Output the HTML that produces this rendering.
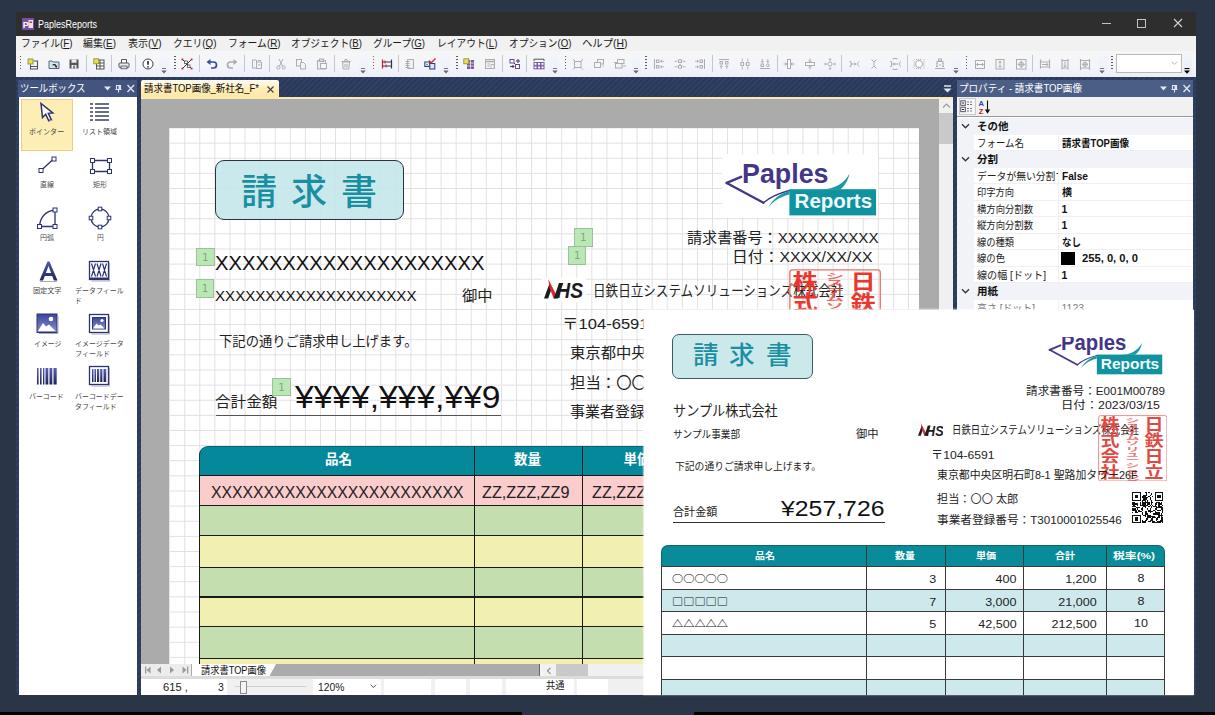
<!DOCTYPE html>
<html lang="ja"><head><meta charset="utf-8"><title>PaplesReports</title>
<style>
html,body{margin:0;padding:0}
body{width:1215px;height:715px;overflow:hidden;background:#2b3548;font-family:"Liberation Sans","Noto Sans CJK JP",sans-serif;}
#root{position:relative;width:1215px;height:715px;overflow:hidden}
.a{position:absolute}
.t{position:absolute;white-space:nowrap;line-height:1;transform-origin:0 0}
u{text-decoration:underline;text-underline-offset:1px}

</style></head>
<body>
<div id="root">
<!-- chrome -->
<div class="a" style="left:0px;top:712px;width:522px;height:3px;background:#000;"></div>
<div class="a" style="left:694px;top:712px;width:521px;height:3px;background:#000;"></div>
<div class="a" style="left:16px;top:12px;width:1180px;height:683px;background:#2a3a5c;background-image:repeating-linear-gradient(135deg,rgba(255,255,255,0.035) 0 1.500px,transparent 1.500px 4px)"></div>
<div class="a" style="left:16px;top:12px;width:1180px;height:23.5px;background:#2e2e2e;"></div>
<svg class="a" style="left:22px;top:18px;" width="12" height="12" viewBox="0 0 12 12"><rect x="0" y="0" width="12" height="12" fill="#7a4f9a"/><rect x="6.5" y="2" width="4.5" height="8" fill="#e8e4ee"/><rect x="7.5" y="3.5" width="2.5" height="1.5" fill="#c33"/><text x="0.8" y="9.6" font-family="Liberation Sans,sans-serif" font-weight="bold" font-size="9" fill="#fff">P</text></svg>
<div class="t" style="left:38px;top:19px;color:#fff;font-size:10.5px;transform:scaleX(0.8566);">PaplesReports</div>
<svg class="a" style="left:1095px;top:14px;" width="100" height="20" viewBox="0 0 100 20"><g stroke="#d4d4d4" stroke-width="0.900" fill="none"><path d="M7 9.5h9"/><rect x="42.5" y="5.5" width="8" height="8"/><path d="M79 5l8 8M87 5l-8 8" stroke-width="1.1"/></g></svg>
<div class="a" style="left:16px;top:35.5px;width:1180px;height:15.5px;background:#f1f1f1;"></div>
<div class="t" style="left:21px;top:38px;color:#1a1a1a;font-size:10.5px;transform:scaleX(0.9292);">ファイル(<u>F</u>)</div>
<div class="t" style="left:83px;top:38px;color:#1a1a1a;font-size:10.5px;transform:scaleX(0.9424);">編集(<u>E</u>)</div>
<div class="t" style="left:127.5px;top:38px;color:#1a1a1a;font-size:10.5px;transform:scaleX(0.9567);">表示(<u>V</u>)</div>
<div class="t" style="left:172.5px;top:38px;color:#1a1a1a;font-size:10.5px;transform:scaleX(0.9320);">クエリ(<u>Q</u>)</div>
<div class="t" style="left:227.5px;top:38px;color:#1a1a1a;font-size:10.5px;transform:scaleX(0.9328);">フォーム(<u>R</u>)</div>
<div class="t" style="left:291px;top:38px;color:#1a1a1a;font-size:10.5px;transform:scaleX(0.9219);">オブジェクト(<u>B</u>)</div>
<div class="t" style="left:373px;top:38px;color:#1a1a1a;font-size:10.5px;transform:scaleX(0.9196);">グループ(<u>G</u>)</div>
<div class="t" style="left:436.5px;top:38px;color:#1a1a1a;font-size:10.5px;transform:scaleX(0.9259);">レイアウト(<u>L</u>)</div>
<div class="t" style="left:508.5px;top:38px;color:#1a1a1a;font-size:10.5px;transform:scaleX(0.9236);">オプション(<u>O</u>)</div>
<div class="t" style="left:581.5px;top:38px;color:#1a1a1a;font-size:10.5px;transform:scaleX(0.9871);">ヘルプ(<u>H</u>)</div>
<!-- toolbar -->
<div class="a" style="left:16px;top:51px;width:1180px;height:25.5px;background:linear-gradient(#f6f6f6,#f3f5fa 60%,#eceff6);"></div>
<div class="a" style="left:20px;top:56px;width:1.3px;height:13px;background:transparent;background-image:repeating-linear-gradient(#5a5a5a 0 1.400px,transparent 1.400px 3px)"></div>
<svg class="a" style="left:26.8px;top:58px;" width="12" height="12" viewBox="0 0 12 12"><rect x="1" y="1" width="5" height="5" fill="#e6e04a" stroke="#8a8a2a" stroke-width=".8"/><path d="M6.5 3h4v8h-7v-4.5" fill="none" stroke="#555" stroke-width="1.1"/><path d="M4 8.5h6" stroke="#555" stroke-width="1"/></svg>
<svg class="a" style="left:48px;top:58px;" width="12" height="12" viewBox="0 0 12 12"><path d="M1 3h3l1 1h6v6.5h-10z" fill="#d5e6ee" stroke="#4a5a66" stroke-width=".9"/><path d="M4 7.5c1-2 4-2 4.5.5l1-.5-1 2.5-2-1.5 1-.2c-.5-1.3-2-1.300-3.500-.8z" fill="#223"/></svg>
<svg class="a" style="left:68.3px;top:58px;" width="12" height="12" viewBox="0 0 12 12"><rect x="1.500" y="1.500" width="9" height="9" fill="#555" /><rect x="3.500" y="1.500" width="5" height="3.200" fill="#f0f0f0"/><rect x="3.500" y="7" width="5" height="3.500" fill="#f0f0f0"/><rect x="5.300" y="7.600" width="1.500" height="2.900" fill="#555"/></svg>
<div class="a" style="left:86.1px;top:55px;width:1px;height:17px;background:#c4c7cc;"></div>
<svg class="a" style="left:92.5px;top:58px;" width="12" height="12" viewBox="0 0 12 12"><rect x="3.500" y="2" width="7.500" height="9" fill="#fff" stroke="#555" stroke-width="1"/><path d="M3.500 5h7.500M3.500 8h7.500M7 2v9" stroke="#555" stroke-width="1"/><rect x="0.800" y="0.800" width="5" height="5" fill="#e6e04a" stroke="#8a8a2a" stroke-width=".8"/></svg>
<div class="a" style="left:110.8px;top:55px;width:1px;height:17px;background:#c4c7cc;"></div>
<svg class="a" style="left:117.6px;top:58px;" width="12" height="12" viewBox="0 0 12 12"><path d="M3.500 5v-3.500h5v3.500" fill="#fff" stroke="#555" stroke-width="1"/><rect x="1" y="5" width="10" height="4.500" rx="1" fill="#e8eef0" stroke="#555" stroke-width="1"/><rect x="3" y="8" width="6" height="2.800" fill="#cfe0e4" stroke="#555" stroke-width=".8"/></svg>
<div class="a" style="left:135.0px;top:55px;width:1px;height:17px;background:#c4c7cc;"></div>
<svg class="a" style="left:141.8px;top:58px;" width="12" height="12" viewBox="0 0 12 12"><circle cx="6" cy="6" r="5" fill="#fff" stroke="#444" stroke-width="1"/><path d="M6 3v3.800" stroke="#222" stroke-width="1.600"/><circle cx="6" cy="8.800" r=".9" fill="#222"/></svg>
<div class="a" style="left:159.9px;top:52px;width:9px;height:23px;background:linear-gradient(#f4f6fa,#ebeff8);"></div>
<svg class="a" style="left:161.4px;top:67.5px;" width="6" height="6" viewBox="0 0 6 6"><path d="M1 0.500h4" stroke="#777" stroke-width="1"/><path d="M0.300 2.500h5.400l-2.700 3z" fill="#666"/></svg>
<div class="a" style="left:174.4px;top:56px;width:1.3px;height:13px;background:transparent;background-image:repeating-linear-gradient(#5a5a5a 0 1.400px,transparent 1.400px 3px)"></div>
<svg class="a" style="left:181px;top:58px;" width="12" height="12" viewBox="0 0 12 12"><path d="M2 2l8 8M10 2l-8 8" stroke="#334" stroke-width="1"/><rect x="3.500" y="3" width="3" height="2.500" fill="#fff" stroke="#334" stroke-width=".7"/><rect x="6.500" y="7" width="2.500" height="2.500" fill="#fff" stroke="#334" stroke-width=".7"/><g fill="#d22"><rect x="0.500" y="0.500" width="1.800" height="1.800"/><rect x="9.700" y="0.500" width="1.800" height="1.800"/><rect x="0.500" y="9.700" width="1.800" height="1.800"/><rect x="9.700" y="9.700" width="1.800" height="1.800"/></g></svg>
<div class="a" style="left:199.2px;top:55px;width:1px;height:17px;background:#c4c7cc;"></div>
<svg class="a" style="left:205.8px;top:58px;" width="12" height="12" viewBox="0 0 12 12"><path d="M3 4h4.500a3 3 0 0 1 0 6h-2.500" fill="none" stroke="#3a4a9a" stroke-width="1.700"/><path d="M0.500 4l4-3v6z" fill="#3a4a9a"/></svg>
<svg class="a" style="left:225.8px;top:58px;" width="12" height="12" viewBox="0 0 12 12"><path d="M9 4h-4.500a3 3 0 0 0 0 6h2.500" fill="none" stroke="#adadad" stroke-width="1.700"/><path d="M11.500 4l-4-3v6z" fill="#adadad"/></svg>
<div class="a" style="left:244.1px;top:55px;width:1px;height:17px;background:#c4c7cc;"></div>
<svg class="a" style="left:250.5px;top:58px;" width="12" height="12" viewBox="0 0 12 12"><path d="M1.500 2h4v8h-4z M5.500 4h5v6.500h-5z" fill="none" stroke="#adadad" stroke-width="1"/><path d="M7 2.500l3 0M7 7h2.500" stroke="#adadad"/></svg>
<div class="a" style="left:268.8px;top:55px;width:1px;height:17px;background:#c4c7cc;"></div>
<svg class="a" style="left:275px;top:58px;" width="12" height="12" viewBox="0 0 12 12"><path d="M4 1l3.500 7M8 1l-3.500 7" stroke="#adadad" stroke-width="1"/><circle cx="3.300" cy="9.500" r="1.600" fill="none" stroke="#adadad"/><circle cx="8.700" cy="9.500" r="1.600" fill="none" stroke="#adadad"/></svg>
<svg class="a" style="left:295.4px;top:58px;" width="12" height="12" viewBox="0 0 12 12"><rect x="1.500" y="1.500" width="5" height="6.500" fill="#f4f4f4" stroke="#adadad"/><path d="M5.500 4.500h3l2 2v4.500h-5z" fill="#f4f4f4" stroke="#adadad"/></svg>
<svg class="a" style="left:316.4px;top:58px;" width="12" height="12" viewBox="0 0 12 12"><rect x="1.500" y="2.500" width="8" height="8.500" fill="#eee" stroke="#adadad"/><rect x="3.500" y="1" width="4" height="2.500" fill="#ddd" stroke="#adadad"/><rect x="4.500" y="5.500" width="6" height="5" fill="#f8f8f8" stroke="#adadad"/></svg>
<div class="a" style="left:334.3px;top:55px;width:1px;height:17px;background:#c4c7cc;"></div>
<svg class="a" style="left:340.4px;top:58px;" width="12" height="12" viewBox="0 0 12 12"><path d="M2.500 4h7l-.7 7h-5.600z" fill="#f2f2f2" stroke="#adadad"/><path d="M1.500 3.500h9M4.500 3.500l.5-2h2l.5 2M5 6v3.500M7 6v3.500" fill="none" stroke="#adadad"/></svg>
<div class="a" style="left:358.5px;top:52px;width:9px;height:23px;background:linear-gradient(#f4f6fa,#ebeff8);"></div>
<svg class="a" style="left:360px;top:67.5px;" width="6" height="6" viewBox="0 0 6 6"><path d="M1 0.500h4" stroke="#777" stroke-width="1"/><path d="M0.300 2.500h5.400l-2.700 3z" fill="#666"/></svg>
<div class="a" style="left:372.9px;top:56px;width:1.3px;height:13px;background:transparent;background-image:repeating-linear-gradient(#c05050 0 1.400px,transparent 1.400px 3px)"></div>
<svg class="a" style="left:380.6px;top:58px;" width="12" height="12" viewBox="0 0 12 12"><path d="M1.500 1.500v9" stroke="#c22" stroke-width="1.200"/><path d="M10.500 1.500v9" stroke="#335" stroke-width="1.200"/><path d="M1.500 4h9M1.500 8h9" stroke="#335" stroke-width="1"/><path d="M4 2.500v3M5 6.500v3" stroke="#c22" stroke-width="1"/></svg>
<div class="a" style="left:398.0px;top:55px;width:1px;height:17px;background:#c4c7cc;"></div>
<svg class="a" style="left:404px;top:58px;" width="12" height="12" viewBox="0 0 12 12"><path d="M3.500 1.500h6v9h-6z" fill="#f0f0f0" stroke="#adadad"/><path d="M1.500 3.500h4M1.500 5.500h4M1.500 7.500h4M1.500 9.500h4" stroke="#adadad"/></svg>
<svg class="a" style="left:423.8px;top:58px;" width="12" height="12" viewBox="0 0 12 12"><rect x="0.800" y="4" width="5" height="4.500" fill="#fff" stroke="#2a3a8a" stroke-width="1"/><rect x="5.800" y="5.500" width="5" height="5.500" fill="#dfe6f5" stroke="#2a3a8a" stroke-width="1"/><path d="M2 5.500l2 2M4 5.500l-2 2" stroke="#2a3a8a" stroke-width=".7"/><path d="M5 2.500l2 2.500l4.500-4.500" fill="none" stroke="#d22" stroke-width="1.300"/></svg>
<div class="a" style="left:441.4px;top:52px;width:9px;height:23px;background:linear-gradient(#f4f6fa,#ebeff8);"></div>
<svg class="a" style="left:442.9px;top:67.5px;" width="6" height="6" viewBox="0 0 6 6"><path d="M1 0.500h4" stroke="#777" stroke-width="1"/><path d="M0.300 2.500h5.400l-2.700 3z" fill="#666"/></svg>
<div class="a" style="left:456.4px;top:56px;width:1.3px;height:13px;background:transparent;background-image:repeating-linear-gradient(#5a5a5a 0 1.400px,transparent 1.400px 3px)"></div>
<svg class="a" style="left:463.3px;top:58px;" width="12" height="12" viewBox="0 0 12 12"><rect x="4" y="2" width="7" height="9" fill="#7a5aa0"/><path d="M4 5h7M4 8h7M7.500 2v9" stroke="#e8e0f0" stroke-width=".8"/><rect x="0.800" y="0.800" width="5" height="5" fill="#e6e04a" stroke="#8a8a2a" stroke-width=".8"/></svg>
<svg class="a" style="left:483.8px;top:58px;" width="12" height="12" viewBox="0 0 12 12"><rect x="1.500" y="1.500" width="9" height="9" fill="#f2f2f2" stroke="#adadad"/><path d="M1.500 3.500h9" stroke="#adadad" stroke-width="1.500"/><path d="M3.500 6h2M3.500 8h2" stroke="#adadad"/><rect x="7" y="6.500" width="3" height="4" fill="#fff" stroke="#adadad" stroke-width=".8"/></svg>
<div class="a" style="left:502.2px;top:55px;width:1px;height:17px;background:#c4c7cc;"></div>
<svg class="a" style="left:508.5px;top:58px;" width="12" height="12" viewBox="0 0 12 12"><rect x="1" y="1.500" width="4" height="3.500" fill="#fff" stroke="#6a4a90" stroke-width="1"/><rect x="6.500" y="6.500" width="4" height="4" fill="#fff" stroke="#6a4a90" stroke-width="1"/><path d="M7 3h4M9 1v4M1 8.500h4M3.500 7l1.500 1.500l-1.500 1.500M5 5l1.500 1.500" fill="none" stroke="#4a2a70" stroke-width="1"/></svg>
<div class="a" style="left:525.9px;top:55px;width:1px;height:17px;background:#c4c7cc;"></div>
<svg class="a" style="left:532.5px;top:58px;" width="12" height="12" viewBox="0 0 12 12"><path d="M1 3v-1.800h10v1.800" fill="none" stroke="#555" stroke-width="1"/><g fill="#fff" stroke="#7a5aa0" stroke-width="1"><rect x="1" y="4.500" width="3" height="2.800"/><rect x="4.500" y="4.500" width="3" height="2.800"/><rect x="8" y="4.500" width="3" height="2.800"/><rect x="1" y="8" width="3" height="2.800"/><rect x="4.500" y="8" width="3" height="2.800"/><rect x="8" y="8" width="3" height="2.800"/></g></svg>
<div class="a" style="left:550.0px;top:52px;width:9px;height:23px;background:linear-gradient(#f4f6fa,#ebeff8);"></div>
<svg class="a" style="left:551.5px;top:67.5px;" width="6" height="6" viewBox="0 0 6 6"><path d="M1 0.500h4" stroke="#777" stroke-width="1"/><path d="M0.300 2.500h5.400l-2.700 3z" fill="#666"/></svg>
<div class="a" style="left:565.0px;top:56px;width:1.3px;height:13px;background:transparent;background-image:repeating-linear-gradient(#5a5a5a 0 1.400px,transparent 1.400px 3px)"></div>
<svg class="a" style="left:572px;top:58px;" width="12" height="12" viewBox="0 0 12 12"><rect x="2.500" y="3.500" width="6.500" height="6" fill="#f4f4f4" stroke="#adadad"/><path d="M1 1l2 2M11 1l-2 2M1 11.500l1.500-1.500M11 11.500l-1.500-1.500" stroke="#adadad"/></svg>
<svg class="a" style="left:592.5px;top:58px;" width="12" height="12" viewBox="0 0 12 12"><rect x="4.500" y="1.500" width="6" height="4.500" fill="#f4f4f4" stroke="#adadad"/><rect x="1.500" y="4.500" width="6" height="5" fill="#f4f4f4" stroke="#adadad"/><path d="M9.500 8l1.500 0" stroke="#adadad"/></svg>
<svg class="a" style="left:614px;top:58px;" width="12" height="12" viewBox="0 0 12 12"><rect x="3.500" y="1.500" width="6.500" height="4" fill="#f4f4f4" stroke="#adadad"/><rect x="1.500" y="5.500" width="6.500" height="4.500" fill="#f4f4f4" stroke="#adadad"/><path d="M0 4.500h3M9 8h3" stroke="#adadad"/></svg>
<div class="a" style="left:631.5px;top:52px;width:9px;height:23px;background:linear-gradient(#f4f6fa,#ebeff8);"></div>
<svg class="a" style="left:633px;top:67.5px;" width="6" height="6" viewBox="0 0 6 6"><path d="M1 0.500h4" stroke="#777" stroke-width="1"/><path d="M0.300 2.500h5.400l-2.700 3z" fill="#666"/></svg>
<div class="a" style="left:645.3px;top:56px;width:1.3px;height:13px;background:transparent;background-image:repeating-linear-gradient(#5a5a5a 0 1.400px,transparent 1.400px 3px)"></div>
<svg class="a" style="left:653px;top:58px;" width="12" height="12" viewBox="0 0 12 12"><path d="M1.500 1v10" stroke="#adadad"/><rect x="3.500" y="2" width="2.500" height="2.500" fill="none" stroke="#adadad"/><rect x="3.500" y="7.500" width="2.500" height="2.500" fill="none" stroke="#adadad"/><path d="M7.500 3.300h3.500M7.500 8.800h3.500M9 2l-1.500 1.300l1.500 1.300M9 7.500l-1.500 1.300l1.500 1.300" fill="none" stroke="#adadad" stroke-width=".9"/></svg>
<svg class="a" style="left:673.7px;top:58px;" width="12" height="12" viewBox="0 0 12 12"><path d="M6 1v10" stroke="#adadad" stroke-dasharray="1.500 1"/><rect x="4.500" y="2" width="3" height="2.500" fill="#fff" stroke="#adadad"/><rect x="4.500" y="7.500" width="3" height="2.500" fill="#fff" stroke="#adadad"/><path d="M0.500 3.300h3M8.500 3.300h3M0.500 8.800h3M8.500 8.800h3" stroke="#adadad" stroke-width=".9"/></svg>
<svg class="a" style="left:693.7px;top:58px;" width="12" height="12" viewBox="0 0 12 12"><path d="M10.500 1v10" stroke="#adadad"/><rect x="6" y="2" width="2.500" height="2.500" fill="none" stroke="#adadad"/><rect x="6" y="7.500" width="2.500" height="2.500" fill="none" stroke="#adadad"/><path d="M1 3.300h3.500M1 8.800h3.500M3 2l1.500 1.300l-1.500 1.300M3 7.500l1.500 1.300l-1.500 1.300" fill="none" stroke="#adadad" stroke-width=".9"/></svg>
<div class="a" style="left:712.0px;top:55px;width:1px;height:17px;background:#c4c7cc;"></div>
<svg class="a" style="left:718px;top:58px;" width="12" height="12" viewBox="0 0 12 12"><path d="M1 1.500h10" stroke="#adadad"/><rect x="2" y="3.500" width="2.500" height="2.500" fill="none" stroke="#adadad"/><rect x="7.500" y="3.500" width="2.500" height="2.500" fill="none" stroke="#adadad"/><path d="M3.300 7.500v3.500M8.800 7.500v3.500M2 9l1.300-1.500l1.300 1.500M7.500 9l1.300-1.500l1.300 1.500" fill="none" stroke="#adadad" stroke-width=".9"/></svg>
<svg class="a" style="left:738.6px;top:58px;" width="12" height="12" viewBox="0 0 12 12"><path d="M1 6h10" stroke="#adadad" stroke-dasharray="1.500 1"/><rect x="2" y="4.500" width="2.500" height="3" fill="#fff" stroke="#adadad"/><rect x="7.500" y="4.500" width="2.500" height="3" fill="#fff" stroke="#adadad"/><path d="M3.300 0.500v3M8.800 0.500v3M3.300 8.500v3M8.800 8.500v3" stroke="#adadad" stroke-width=".9"/></svg>
<svg class="a" style="left:758.9px;top:58px;" width="12" height="12" viewBox="0 0 12 12"><path d="M1 10.500h10" stroke="#adadad"/><rect x="2" y="6" width="2.500" height="2.500" fill="none" stroke="#adadad"/><circle cx="8.800" cy="7.300" r="1.400" fill="none" stroke="#adadad"/><path d="M3.300 1v3.500M8.800 1v3.500M2 3l1.300 1.500l1.300-1.500M7.500 3l1.300 1.500l1.300-1.500" fill="none" stroke="#adadad" stroke-width=".9"/></svg>
<div class="a" style="left:776.7px;top:55px;width:1px;height:17px;background:#c4c7cc;"></div>
<svg class="a" style="left:783.3px;top:58px;" width="12" height="12" viewBox="0 0 12 12"><rect x="4.500" y="1.500" width="3" height="9" fill="#fff" stroke="#adadad"/><path d="M0.500 6h3.500M8 6h3.500M2.500 4.700l1.500 1.300l-1.500 1.300M9.500 4.700l-1.500 1.300l1.500 1.300" fill="none" stroke="#adadad" stroke-width=".9"/></svg>
<svg class="a" style="left:803.6px;top:58px;" width="12" height="12" viewBox="0 0 12 12"><rect x="1.500" y="4.500" width="9" height="3" fill="#fff" stroke="#adadad"/><path d="M6 0.500v3.500M6 8v3.500M4.700 2.500l1.300 1.500l1.300-1.500M4.700 9.500l1.300-1.500l1.300 1.500" fill="none" stroke="#adadad" stroke-width=".9"/></svg>
<svg class="a" style="left:823.8px;top:58px;" width="12" height="12" viewBox="0 0 12 12"><circle cx="6" cy="6" r="2" fill="#fff" stroke="#adadad"/><path d="M0.500 6h3M8.500 6h3M6 0.500v3M6 8.500v3" stroke="#adadad" stroke-width=".9"/><path d="M2 4.800l-1.500 1.200l1.500 1.200M10 4.800l1.500 1.200l-1.500 1.200M4.800 2l1.200-1.500l1.200 1.500M4.800 10l1.200 1.500l1.200-1.500" fill="none" stroke="#adadad" stroke-width=".8"/></svg>
<div class="a" style="left:841.2px;top:55px;width:1px;height:17px;background:#c4c7cc;"></div>
<svg class="a" style="left:847.5px;top:58px;" width="12" height="12" viewBox="0 0 12 12"><path d="M1.500 3.500h1.500v5h-1.500M3 6h5M6.500 4.500l1.500 1.500l-1.500 1.500M11 3.500l-2 2.500l2 2.500" fill="none" stroke="#adadad"/></svg>
<svg class="a" style="left:868.3px;top:58px;" width="12" height="12" viewBox="0 0 12 12"><path d="M3.500 1.500l2.500 2.500l2.500-2.500M6 4v4M3.500 10.500l2.500-2.500l2.500 2.500" fill="none" stroke="#adadad"/></svg>
<svg class="a" style="left:888.8px;top:58px;" width="12" height="12" viewBox="0 0 12 12"><path d="M1 3.500h1.500v5h-1.500M3 6h6M4.700 4.500l1.300 1.500l-1.300 1.500M11.500 3.500l-1.500 2.500l1.500 2.500M4 1.500v-1h4v1M4 10.500v1h4v-1" fill="none" stroke="#adadad"/></svg>
<div class="a" style="left:907.1px;top:55px;width:1px;height:17px;background:#c4c7cc;"></div>
<svg class="a" style="left:912.7px;top:58px;" width="12" height="12" viewBox="0 0 12 12"><circle cx="6" cy="6" r="3.500" fill="#fff" stroke="#adadad"/><path d="M1 1.500v9M11 1.500v9" stroke="#adadad" stroke-dasharray="1 1"/><path d="M3 1.500h6M3 10.500h6" stroke="#adadad" stroke-dasharray="1 1"/></svg>
<svg class="a" style="left:933.7px;top:58px;" width="12" height="12" viewBox="0 0 12 12"><path d="M1 10.500h10M2.500 3.500h7" stroke="#adadad"/><rect x="4.500" y="1" width="3" height="2" fill="none" stroke="#adadad"/><path d="M3 5v3.500M9 5v3.500M2 5h2M8 5h2M2 8.500h2M8 8.500h2M5 7h2" stroke="#adadad"/></svg>
<div class="a" style="left:951.7px;top:52px;width:9px;height:23px;background:linear-gradient(#f4f6fa,#ebeff8);"></div>
<svg class="a" style="left:953.2px;top:67.5px;" width="6" height="6" viewBox="0 0 6 6"><path d="M1 0.500h4" stroke="#777" stroke-width="1"/><path d="M0.300 2.500h5.400l-2.700 3z" fill="#666"/></svg>
<div class="a" style="left:965.8px;top:56px;width:1.3px;height:13px;background:transparent;background-image:repeating-linear-gradient(#5a5a5a 0 1.400px,transparent 1.400px 3px)"></div>
<svg class="a" style="left:973.7px;top:58px;" width="12" height="12" viewBox="0 0 12 12"><rect x="1.500" y="2.500" width="9" height="8" fill="#f6f6f6" stroke="#adadad"/><path d="M2.500 6.500h7M4 5l-1.500 1.500l1.500 1.500M8 5l1.500 1.500l-1.500 1.500" fill="none" stroke="#adadad"/></svg>
<svg class="a" style="left:994.2px;top:58px;" width="12" height="12" viewBox="0 0 12 12"><rect x="2" y="1.500" width="8" height="9.500" fill="#f6f6f6" stroke="#adadad"/><path d="M6 3v6.500M4.500 4.500l1.500-1.500l1.500 1.500M4.500 8l1.500 1.500l1.500-1.500" fill="none" stroke="#adadad"/></svg>
<svg class="a" style="left:1014.7px;top:58px;" width="12" height="12" viewBox="0 0 12 12"><rect x="1.500" y="1.500" width="9.500" height="9.500" fill="#f6f6f6" stroke="#adadad"/><circle cx="6.300" cy="6.300" r="2.300" fill="none" stroke="#adadad"/><path d="M2.500 6.300h7.500M6.300 2.500v7.500" stroke="#adadad"/></svg>
<div class="a" style="left:1032.0px;top:55px;width:1px;height:17px;background:#c4c7cc;"></div>
<svg class="a" style="left:1038.6px;top:58px;" width="12" height="12" viewBox="0 0 12 12"><path d="M1.500 1.500v9M10.500 1.500v9" stroke="#adadad" stroke-width="1.200"/><rect x="1.500" y="4" width="9" height="5" fill="#f6f6f6" stroke="#adadad"/><path d="M3 6.500h6M7.500 5l1.500 1.500l-1.500 1.500" fill="none" stroke="#adadad"/></svg>
<svg class="a" style="left:1059px;top:58px;" width="12" height="12" viewBox="0 0 12 12"><path d="M3 1v10.500M9 1v10.500M3 2.500h6M3 10h6" stroke="#adadad" stroke-width="1.100"/><path d="M6 3.500v5.500M4.800 7.500l1.200 1.500l1.200-1.500" fill="none" stroke="#adadad"/></svg>
<svg class="a" style="left:1079.4px;top:58px;" width="12" height="12" viewBox="0 0 12 12"><path d="M1.500 1v11M10.500 1v11M1.500 2.500h9" stroke="#adadad" stroke-width="1.100"/><rect x="1.500" y="2.500" width="9" height="7.500" fill="#f6f6f6" stroke="#adadad"/><circle cx="6" cy="6.300" r="2.200" fill="none" stroke="#adadad"/><path d="M3 6.300h6M6 4v5" stroke="#adadad"/></svg>
<div class="a" style="left:1097.5px;top:52px;width:9px;height:23px;background:linear-gradient(#f4f6fa,#ebeff8);"></div>
<svg class="a" style="left:1099px;top:67.5px;" width="6" height="6" viewBox="0 0 6 6"><path d="M1 0.500h4" stroke="#777" stroke-width="1"/><path d="M0.300 2.500h5.400l-2.700 3z" fill="#666"/></svg>
<div class="a" style="left:1111.4px;top:56px;width:1.3px;height:13px;background:transparent;background-image:repeating-linear-gradient(#5a5a5a 0 1.400px,transparent 1.400px 3px)"></div>
<div class="a" style="left:1115.5px;top:54px;width:66px;height:18.5px;background:#fff;border:1px solid #b8b8b8;box-sizing:border-box"></div>
<svg class="a" style="left:1171px;top:60.5px;" width="7" height="5" viewBox="0 0 7 5"><path d="M0.700 0.700l2.700 2.800l2.700-2.800" fill="none" stroke="#bbb" stroke-width="1"/></svg>
<div class="a" style="left:1183px;top:52px;width:9px;height:23px;background:linear-gradient(#f3f5fa,#e6ebf7);"></div>
<svg class="a" style="left:1184px;top:67.5px;" width="6" height="6" viewBox="0 0 6 6"><path d="M0.500 0.500h5" stroke="#000" stroke-width="1.200"/><path d="M0 2.500h6l-3 3.200z" fill="#000"/></svg>
<!-- toolbox -->
<div class="a" style="left:18px;top:80px;width:118.7px;height:16.5px;background:#43557f;"></div>
<div class="t" style="left:20.3px;top:83px;color:#fff;font-size:10.5px;transform:scaleX(0.8950);">ツールボックス</div>
<svg class="a" style="left:103px;top:84px;" width="34" height="9" viewBox="0 0 34 9"><path d="M1 2.500h7l-3.500 4z" fill="#dfe6f2"/><path d="M13.500 1v4.500M17.500 1v4.500M13.500 1.500h4M12.500 5.500h6M15.500 5.500v3" stroke="#dfe6f2" stroke-width="1.100" fill="none"/><rect x="15.500" y="1.500" width="2" height="4" fill="#dfe6f2"/><path d="M24.500 1l6.500 7M31 1l-6.500 7" stroke="#dfe6f2" stroke-width="1.300"/></svg>
<div class="a" style="left:18.8px;top:96.5px;width:117.8px;height:598px;background:#fff;"></div>
<div class="a" style="left:21px;top:99px;width:52px;height:51.5px;background:#fdeeb5;border:1px solid #e8cf82;box-sizing:border-box"></div>
<svg class="a" style="left:37px;top:102px;" width="20" height="22" viewBox="0 0 20 22"><path d="M4 1.500l1.500 14l3.200-3.200l3 6.500l2.600-1.200l-3-6.300l4.500-.3z" fill="#fff" stroke="#2d3270" stroke-width="1.500" stroke-linejoin="miter"/><path d="M12 19l3.500-1" stroke="#99a" stroke-width="1"/></svg>
<div class="t" style="left:28.8px;top:128.3px;color:#4a4a4a;font-size:7.4px;transform:scaleX(0.9522);">ポインター</div>
<svg class="a" style="left:89px;top:102px;" width="22" height="20" viewBox="0 0 22 20"><g stroke="#3a3f66" stroke-width="1.600"><path d="M1 2h3M6 2h14M1 6h3M6 6h14M1 10h3M6 10h14M1 14h3M6 14h14M1 18h3M6 18h14"/></g></svg>
<div class="t" style="left:82.4px;top:128.3px;color:#4a4a4a;font-size:7.4px;transform:scaleX(0.9467);">リスト領域</div>
<svg class="a" style="left:36px;top:154px;" width="22" height="22" viewBox="0 0 22 22"><path d="M5 16.500l12-11" stroke="#2d3270" stroke-width="1.300"/><rect x="3.0" y="14.5" width="4" height="4" fill="#fff" stroke="#2d3270" stroke-width="1"/><rect x="16.0" y="3.0" width="4" height="4" fill="#fff" stroke="#2d3270" stroke-width="1"/></svg>
<div class="t" style="left:40.2px;top:181.3px;color:#4a4a4a;font-size:7.4px;transform:scaleX(0.9461);">直線</div>
<svg class="a" style="left:88.5px;top:155px;" width="24" height="22" viewBox="0 0 24 22"><path d="M3 5.500h18M3 16.500h18M3.500 5v11M20.500 5v11" stroke="#2d3270" stroke-width="1.300"/><rect x="1.5" y="3.5" width="4" height="4" fill="#fff" stroke="#2d3270" stroke-width="1"/><rect x="18.5" y="3.5" width="4" height="4" fill="#fff" stroke="#2d3270" stroke-width="1"/><rect x="1.5" y="14.5" width="4" height="4" fill="#fff" stroke="#2d3270" stroke-width="1"/><rect x="18.5" y="14.5" width="4" height="4" fill="#fff" stroke="#2d3270" stroke-width="1"/></svg>
<div class="t" style="left:93px;top:181.3px;color:#4a4a4a;font-size:7.4px;transform:scaleX(0.9461);">矩形</div>
<svg class="a" style="left:35px;top:205px;" width="25" height="25" viewBox="0 0 25 25"><path d="M4.500 21.500c0.500-9 6-15.500 15.500-16.500M4.500 21.500h15.500v-16.500" fill="none" stroke="#2d3270" stroke-width="1.300"/><rect x="2.5" y="19.5" width="4" height="4" fill="#fff" stroke="#2d3270" stroke-width="1"/><rect x="18.0" y="19.5" width="4" height="4" fill="#fff" stroke="#2d3270" stroke-width="1"/><rect x="18.0" y="3.0" width="4" height="4" fill="#fff" stroke="#2d3270" stroke-width="1"/></svg>
<div class="t" style="left:40.2px;top:234px;color:#4a4a4a;font-size:7.4px;transform:scaleX(0.9461);">円弧</div>
<svg class="a" style="left:87px;top:205px;" width="26" height="25" viewBox="0 0 26 25"><circle cx="13" cy="13" r="9" fill="none" stroke="#2d3270" stroke-width="1.300"/><rect x="11.2" y="2.2" width="3.6" height="3.6" fill="#fff" stroke="#2d3270" stroke-width="1"/><rect x="11.2" y="20.2" width="3.6" height="3.6" fill="#fff" stroke="#2d3270" stroke-width="1"/><rect x="2.2" y="11.2" width="3.6" height="3.6" fill="#fff" stroke="#2d3270" stroke-width="1"/><rect x="20.2" y="11.2" width="3.6" height="3.6" fill="#fff" stroke="#2d3270" stroke-width="1"/></svg>
<div class="t" style="left:96.7px;top:234px;color:#4a4a4a;font-size:7.4px;transform:scaleX(0.9181);">円</div>
<svg class="a" style="left:37px;top:259px;" width="22" height="24" viewBox="0 0 22 24"><defs><linearGradient id="ga" x1="0" y1="0" x2="0" y2="1"><stop offset="0" stop-color="#5058a8"/><stop offset="1" stop-color="#23265a"/></linearGradient></defs><path d="M10.500 2.500l-8 19h3.600l1.700-4.500h7.400l1.700 4.500h3.600l-8-19zM8.900 14l2.600-7l2.600 7z" fill="url(#ga)"/><path d="M3 22.500h17" stroke="#aab" stroke-width="1"/></svg>
<div class="t" style="left:32.6px;top:287px;color:#4a4a4a;font-size:7.4px;transform:scaleX(0.9635);">固定文字</div>
<svg class="a" style="left:88px;top:260px;" width="23" height="22" viewBox="0 0 23 22"><rect x="1.500" y="1.500" width="19" height="18" fill="#fff" stroke="#2d3270" stroke-width="1.300"/><path d="M2 18.300h18" stroke="#2d3270" stroke-width="1.600"/><path d="M21.500 3v18h-18" fill="none" stroke="#aab" stroke-width="1"/><g stroke="#2d3270" stroke-width="1.200"><path d="M3.500 3.500l4 13M7.500 3.500l-4 13M9 3.500l4 13M13 3.500l-4 13M14.500 3.500l4 13M18.500 3.500l-4 13"/></g></svg>
<div class="t" style="left:75.4px;top:287px;color:#4a4a4a;font-size:7.4px;transform:scaleX(0.9420);">データフィール</div>
<div class="t" style="left:75.4px;top:297px;color:#4a4a4a;font-size:7.4px;transform:scaleX(0.8911);">ド</div>
<svg class="a" style="left:36px;top:313px;" width="23" height="22" viewBox="0 0 23 22"><defs><linearGradient id="gi" x1="0" y1="0" x2="0" y2="1"><stop offset="0" stop-color="#3c43a0"/><stop offset="1" stop-color="#8a90c8"/></linearGradient></defs><rect x="1" y="1" width="20" height="18.500" fill="url(#gi)" stroke="#2d3270" stroke-width="1"/><path d="M2 18l5-8l3 3.500l3-2l6.500 6.500z" fill="#fff"/><circle cx="15" cy="6" r="2.300" fill="#fff"/><path d="M22 3v17.500h-19" fill="none" stroke="#aab" stroke-width="1"/></svg>
<div class="t" style="left:33.5px;top:339.5px;color:#4a4a4a;font-size:7.4px;transform:scaleX(0.9347);">イメージ</div>
<svg class="a" style="left:88px;top:313px;" width="23" height="22" viewBox="0 0 23 22"><defs><linearGradient id="gj" x1="0" y1="0" x2="0" y2="1"><stop offset="0" stop-color="#3c43a0"/><stop offset="1" stop-color="#8a90c8"/></linearGradient></defs><rect x="1.500" y="1.500" width="19" height="18" fill="#fff" stroke="#2d3270" stroke-width="1.300"/><rect x="4.500" y="4.500" width="13" height="11.500" fill="url(#gj)" stroke="#2d3270" stroke-width="1"/><path d="M5 15.500l3.500-5l2 2l2-1l4 4z" fill="#fff"/><circle cx="14" cy="7.500" r="1.600" fill="#fff"/><path d="M21.500 3v18h-18" fill="none" stroke="#aab" stroke-width="1"/></svg>
<div class="t" style="left:75.4px;top:339.5px;color:#4a4a4a;font-size:7.4px;transform:scaleX(0.9420);">イメージデータ</div>
<div class="t" style="left:75.4px;top:349.6px;color:#4a4a4a;font-size:7.4px;transform:scaleX(0.9508);">フィールド</div>
<svg class="a" style="left:36px;top:367px;" width="22" height="18" viewBox="0 0 22 18"><defs><linearGradient id="gb" x1="0" y1="0" x2="0" y2="1"><stop offset="0" stop-color="#5a62b0"/><stop offset="1" stop-color="#1f2258"/></linearGradient></defs><g fill="url(#gb)"><rect x="1" y="1" width="1.600" height="16.500"/><rect x="4" y="1" width="1.600" height="16.500"/><rect x="7" y="1" width="1.400" height="16.500"/><rect x="9.500" y="1" width="2.800" height="16.500"/><rect x="13.500" y="1" width="2.800" height="16.500"/><rect x="17.500" y="1" width="3.200" height="16.500"/></g></svg>
<div class="t" style="left:29.3px;top:392.7px;color:#4a4a4a;font-size:7.4px;transform:scaleX(0.9386);">バーコード</div>
<svg class="a" style="left:88px;top:365px;" width="23" height="22" viewBox="0 0 23 22"><defs><linearGradient id="gc" x1="0" y1="0" x2="0" y2="1"><stop offset="0" stop-color="#5a62b0"/><stop offset="1" stop-color="#1f2258"/></linearGradient></defs><rect x="1.500" y="1.500" width="19" height="18" fill="#fff" stroke="#2d3270" stroke-width="1.300"/><g fill="url(#gc)"><rect x="4" y="4" width="1.500" height="13"/><rect x="6.500" y="4" width="1.500" height="13"/><rect x="9" y="4" width="2.200" height="13"/><rect x="12.200" y="4" width="2.200" height="13"/><rect x="15.500" y="4" width="2.700" height="13"/></g><path d="M21.500 3v18h-18" fill="none" stroke="#aab" stroke-width="1"/></svg>
<div class="t" style="left:75.4px;top:392.7px;color:#4a4a4a;font-size:7.4px;transform:scaleX(0.9391);">バーコードデー</div>
<div class="t" style="left:75.4px;top:402.8px;color:#4a4a4a;font-size:7.4px;transform:scaleX(0.9411);">タフィールド</div>
<!-- design -->
<div class="a" style="left:141px;top:80px;width:138px;height:17px;background:linear-gradient(#fffdf2,#ffeeb8 50%,#ffe8a6);border-radius:2px 2px 0 0"></div>
<div class="t" style="left:143.5px;top:83px;color:#111;font-size:10.5px;transform:scaleX(0.9014);">請求書TOP画像_新社名_F*</div>
<svg class="a" style="left:266px;top:84.5px;" width="9" height="9" viewBox="0 0 9 9"><path d="M1.500 1.500l6 6M7.500 1.500l-6 6" stroke="#444" stroke-width="1.200"/></svg>
<svg class="a" style="left:943px;top:85px;" width="9" height="8" viewBox="0 0 9 8"><path d="M1 1h7" stroke="#dfe6f2" stroke-width="1.500"/><path d="M0.500 3.500h8l-4 4z" fill="#dfe6f2"/></svg>
<div class="a" style="left:141px;top:96.7px;width:811.5px;height:3px;background:#fce9ad;"></div>
<div class="a" style="left:141px;top:99px;width:798px;height:565px;background:#ababab;"></div>
<div class="a" style="left:939px;top:99px;width:13.5px;height:565px;background:#f0f0f0;"></div>
<div class="a" style="left:939px;top:113px;width:13.5px;height:31px;background:#c9c9c9;"></div>
<svg class="a" style="left:941.5px;top:102px;" width="9" height="7" viewBox="0 0 9 7"><path d="M1 5.500l3.500-3.500l3.500 3.500" fill="none" stroke="#9a9a9a" stroke-width="1.100"/></svg>
<div class="a" style="left:168.700px;top:127.800px;width:750.500px;height:536px;background-color:#fff;background-image:linear-gradient(90deg,#e0e0e0 1px,transparent 1px),linear-gradient(#e0e0e0 1px,transparent 1px);background-size:15.085px 15.125px,15.085px 15.125px;background-position:0.200px 0,0 -0.500px"></div>
<div class="a" style="left:215px;top:159.5px;width:188.5px;height:60.5px;background:rgba(196,231,235,0.9);border:1.300px solid #2c3338;border-radius:9px;box-sizing:border-box"></div>
<div class="t" style="left:241.3px;top:174.5px;color:#1b8fa2;font-size:36.5px;font-weight:500;transform:scaleX(0.9863);">請</div>
<div class="t" style="left:291.1px;top:174.5px;color:#1b8fa2;font-size:36.5px;font-weight:500;transform:scaleX(0.9863);">求</div>
<div class="t" style="left:341.1px;top:174.5px;color:#1b8fa2;font-size:36.5px;font-weight:500;transform:scaleX(0.9863);">書</div>
<div class="a" style="left:196.2px;top:247.7px;width:18.5px;height:18.7px;background:#b9e8b5;border:1px solid #9dbf9b;box-sizing:border-box"></div><div class="t" style="left:202.1px;top:251.8px;color:#83a585;font-size:10.3px;font-family:'DejaVu Sans',sans-serif;">1</div>
<div class="a" style="left:196.2px;top:279.3px;width:17.8px;height:18.4px;background:#b9e8b5;border:1px solid #9dbf9b;box-sizing:border-box"></div><div class="t" style="left:201.8px;top:283.2px;color:#83a585;font-size:10.3px;font-family:'DejaVu Sans',sans-serif;">1</div>
<div class="t" style="left:215px;top:252.7px;color:#111;font-size:20.6px;transform:scaleX(0.9810);">XXXXXXXXXXXXXXXXXXXX</div>
<div class="t" style="left:215px;top:287.5px;color:#111;font-size:15.5px;transform:scaleX(0.9745);">XXXXXXXXXXXXXXXXXXXX</div>
<div class="t" style="left:462px;top:288.6px;color:#222;font-size:14.8px;transform:scaleX(1.0301);">御中</div>
<div class="t" style="left:219px;top:334.5px;color:#222;font-size:13.2px;transform:scaleX(1.0102);">下記の通りご請求申し上げます。</div>
<div class="t" style="left:215.4px;top:394px;color:#222;font-size:15px;transform:scaleX(1.0414);">合計金額</div>
<div class="a" style="left:215.5px;top:414.8px;width:285.5px;height:1px;background:#555;"></div>
<div class="a" style="left:272.4px;top:378px;width:18.5px;height:18.2px;background:#b9e8b5;border:1px solid #9dbf9b;box-sizing:border-box"></div><div class="t" style="left:278.3px;top:381.8px;color:#83a585;font-size:10.3px;font-family:'DejaVu Sans',sans-serif;">1</div>
<div class="t" style="left:294.5px;top:380.9px;color:#111;font-size:32px;transform:scaleX(1.0498);">¥¥¥¥,¥¥¥,¥¥9</div>
<div class="a" style="left:721.8px;top:154.4px;width:156.7px;height:63.6px;background:#fff;"></div>
<svg class="a" style="left:721.8px;top:154.4px" width="156.7" height="63.6" viewBox="0 0 156.700 63.600"><g fill="none" stroke="#43358a" stroke-linecap="round" stroke-linejoin="round"><path d="M19.100 22.900l-14.400 6" stroke-width="2.500"/><path d="M4.700 28.900l36.800 19.900" stroke-width="2.300"/><path d="M41.500 48.800c6.500-5.800 14.500-9.300 25.900-12.300" stroke-width="1.500"/></g><path d="M46.400 53.300c5.600-6.800 12.600-10.800 21-12.800v-3.500c-9.400 2.500-16.400 8-21 16.300z" fill="#1b9aa6"/><path d="M100 35.500c14-1 22.500-6.500 27.500-16.100c-1.500 7.600-5 12.600-9.300 16.100z" fill="#1b9aa6"/><rect x="67.400" y="35.200" width="86.700" height="26.200" fill="#10939f"/><text x="20" y="29.200" font-family="Liberation Sans,sans-serif" font-weight="bold" font-size="28.400" fill="#43358a" textLength="86.500" lengthAdjust="spacingAndGlyphs">Paples</text><text x="72.600" y="54.100" font-family="Liberation Sans,sans-serif" font-weight="bold" font-size="20.300" fill="#f2fbfb" textLength="77.500" lengthAdjust="spacingAndGlyphs">Reports</text></svg>
<div class="a" style="left:574.3px;top:228.4px;width:18.3px;height:18.3px;background:#b9e8b5;border:1px solid #9dbf9b;box-sizing:border-box"></div><div class="t" style="left:580.1px;top:232.2px;color:#83a585;font-size:10.3px;font-family:'DejaVu Sans',sans-serif;">1</div>
<div class="a" style="left:568px;top:246.4px;width:18.3px;height:18.3px;background:#b9e8b5;border:1px solid #9dbf9b;box-sizing:border-box"></div><div class="t" style="left:573.9px;top:250.2px;color:#83a585;font-size:10.3px;font-family:'DejaVu Sans',sans-serif;">1</div>
<div class="t" style="left:687.3px;top:230px;color:#222;font-size:15px;transform:scaleX(1.0076);">請求書番号：XXXXXXXXXX</div>
<div class="t" style="left:732px;top:249px;color:#222;font-size:15px;transform:scaleX(1.0534);">日付：XXXX/XX/XX</div>
<div class="a" style="left:541.5px;top:278.4px;width:44px;height:23.2px;background:#fff;"></div>
<svg class="a" style="left:544.1px;top:279.4px" width="39.5" height="20.0" viewBox="0 0 39.500 20"><path d="M0 19.500h4.200l3.800-11l-2.300-4.500z" fill="#1c1c1c"/><path d="M4.200 0l9.600 18.800l-4.100.7l-3.800-9.600z" fill="#e0262c"/><text x="12.300" y="19.400" font-family="Liberation Sans,sans-serif" font-weight="bold" font-style="italic" font-size="22" fill="#1c1c1c" textLength="26.800" lengthAdjust="spacingAndGlyphs">HS</text><path d="M9.700 19.500h4.200l5.400-15.500h-4.200z" fill="#1c1c1c"/></svg>
<div class="t" style="left:593.3px;top:283.6px;color:#222;font-size:14.4px;transform:scaleX(0.8734);">日鉄日立システムソリューションズ株式会社</div>
<svg class="a" style="left:789px;top:268.8px" width="92.1" height="88.2" viewBox="0 0 69.500 66.600"><rect x="0.600" y="0.600" width="68.300" height="65.400" rx="2" fill="none" stroke="#ee7068" stroke-width="1"/><g font-family="Noto Sans CJK JP,sans-serif" font-weight="700" fill="#e8382e"><text transform="translate(46.500,15.3) scale(1.080,0.900)" font-size="17.600">日</text><text transform="translate(46.500,31.05) scale(1.080,0.900)" font-size="17.600">鉄</text><text transform="translate(46.500,46.8) scale(1.080,0.900)" font-size="17.600">日</text><text transform="translate(46.500,62.55) scale(1.080,0.900)" font-size="17.600">立</text><text transform="translate(2.600,15.3) scale(1.080,0.900)" font-size="17.600">株</text><text transform="translate(2.600,31.05) scale(1.080,0.900)" font-size="17.600">式</text><text transform="translate(2.600,46.8) scale(1.080,0.900)" font-size="17.600">会</text><text transform="translate(2.600,62.55) scale(1.080,0.900)" font-size="17.600">社</text></g><g font-family="Noto Sans CJK JP,sans-serif" font-weight="700" fill="#e8382e" opacity=".75"><text transform="translate(27.500,7.3) scale(1.120,0.460)" font-size="12.500">シ</text><text transform="translate(27.500,12.95) scale(1.120,0.460)" font-size="12.500">ス</text><text transform="translate(27.500,18.6) scale(1.120,0.460)" font-size="12.500">テ</text><text transform="translate(27.500,24.25) scale(1.120,0.460)" font-size="12.500">ム</text><text transform="translate(27.500,29.9) scale(1.120,0.460)" font-size="12.500">ソ</text><text transform="translate(27.500,35.55) scale(1.120,0.460)" font-size="12.500">リ</text><text transform="translate(27.500,41.2) scale(1.120,0.460)" font-size="12.500">ュ</text><text transform="translate(27.500,46.85) scale(1.120,0.460)" font-size="12.500">ー</text><text transform="translate(27.500,52.5) scale(1.120,0.460)" font-size="12.500">シ</text><text transform="translate(27.500,58.15) scale(1.120,0.460)" font-size="12.500">ョ</text><text transform="translate(27.500,63.8) scale(1.120,0.460)" font-size="12.500">ン</text><text transform="translate(27.500,69.45) scale(1.120,0.460)" font-size="12.500">ズ</text></g></svg>
<div class="t" style="left:562.3px;top:316.5px;color:#222;font-size:14.5px;transform:scaleX(1.1414);">〒104-6591</div>
<div class="t" style="left:570px;top:344.5px;color:#222;font-size:15px;transform:scaleX(1.0211);">東京都中央区明石町8-1</div>
<div class="t" style="left:570px;top:374.5px;color:#222;font-size:15px;transform:scaleX(1.0259);">担当：〇〇 太郎</div>
<div class="t" style="left:570px;top:403.5px;color:#222;font-size:15px;transform:scaleX(0.9999);">事業者登録番号：</div>
<div class="a" style="left:198.5px;top:445.6px;width:720.5px;height:29.9px;background:#05899a;border-radius:9px 0 0 0;border-top:1px solid #0b6470;border-left:1.200px solid #123a40;box-sizing:border-box"></div>
<div class="a" style="left:199px;top:475px;width:720px;height:30.2px;background:#fbcccc;"></div>
<div class="a" style="left:199px;top:505.2px;width:720px;height:29.8px;background:#c5deb0;"></div>
<div class="a" style="left:199px;top:535px;width:720px;height:32px;background:#f2f0b0;"></div>
<div class="a" style="left:199px;top:567px;width:720px;height:29.8px;background:#c5deb0;"></div>
<div class="a" style="left:199px;top:596.8px;width:720px;height:29.9px;background:#f2f0b0;"></div>
<div class="a" style="left:199px;top:626.7px;width:720px;height:31.6px;background:#c5deb0;"></div>
<div class="a" style="left:199px;top:658.3px;width:720px;height:5.7px;background:#f2f0b0;"></div>
<div class="a" style="left:199px;top:474.5px;width:720px;height:1.2px;background:#1a1a1a;"></div>
<div class="a" style="left:199px;top:504.6px;width:720px;height:1px;background:#1a1a1a;"></div>
<div class="a" style="left:199px;top:534.6px;width:720px;height:1px;background:#1a1a1a;"></div>
<div class="a" style="left:199px;top:566.7px;width:720px;height:1px;background:#1a1a1a;"></div>
<div class="a" style="left:199px;top:596px;width:720px;height:1.5px;background:#1a1a1a;"></div>
<div class="a" style="left:199px;top:626.3px;width:720px;height:1px;background:#1a1a1a;"></div>
<div class="a" style="left:199px;top:657.8px;width:720px;height:1px;background:#1a1a1a;"></div>
<div class="a" style="left:198.5px;top:474px;width:1.2px;height:190px;background:#1a1a1a;"></div>
<div class="a" style="left:473.7px;top:445.8px;width:1.2px;height:218.2px;background:#1a1a1a;"></div>
<div class="a" style="left:581.9px;top:445.8px;width:1.2px;height:218.2px;background:#1a1a1a;"></div>
<div class="t" style="left:325px;top:453.3px;color:#fff;font-size:13.5px;font-weight:700;transform:scaleX(1.0000);">品名</div>
<div class="t" style="left:514px;top:453.3px;color:#fff;font-size:13.5px;font-weight:700;transform:scaleX(1.0000);">数量</div>
<div class="t" style="left:623.6px;top:453.3px;color:#fff;font-size:13.5px;font-weight:700;transform:scaleX(1.0000);">単価</div>
<div class="t" style="left:211.4px;top:484.5px;color:#222;font-size:16px;transform:scaleX(0.9858);">XXXXXXXXXXXXXXXXXXXXXXXX</div>
<div class="t" style="left:482.4px;top:484.5px;color:#222;font-size:16px;transform:scaleX(1.0150);">ZZ,ZZZ,ZZ9</div>
<div class="t" style="left:592.4px;top:484.5px;color:#222;font-size:16px;transform:scaleX(1.0150);">ZZ,ZZZ,ZZ9</div>
<div class="a" style="left:141px;top:663.6px;width:50.4px;height:12.8px;background:#ececec;"></div>
<svg class="a" style="left:143px;top:666px;" width="48" height="8" viewBox="0 0 48 8"><g fill="#9a9a9a"><path d="M2 0.500h1.300v7h-1.300zM7.500 0.500v7l-4-3.500z"/><path d="M18 0.500v7l-4-3.500z"/><path d="M27 0.500v7l4-3.500z"/><path d="M44 0.500h1.300v7h-1.300zM39.500 0.500v7l4-3.500z"/></g></svg>
<div class="a" style="left:191px;top:663.6px;width:348px;height:12.8px;background:#ababab;"></div>
<svg class="a" style="left:191px;top:663.6px;" width="86" height="13" viewBox="0 0 86 13"><path d="M1 0h84l-7 13h-75.500a1.500 1.500 0 0 1-1.500-1.500z" fill="#fff"/></svg>
<div class="t" style="left:201px;top:666px;color:#111;font-size:10px;transform:scaleX(0.9234);">請求書TOP画像</div>
<div class="a" style="left:141px;top:676.4px;width:811.5px;height:2.3px;background:#dcdcdc;"></div>
<div class="a" style="left:538.6px;top:663.6px;width:4px;height:12.8px;background:#f4f4f4;border-left:1px solid #666;box-sizing:border-box"></div>
<div class="a" style="left:542.5px;top:663.6px;width:410px;height:12.8px;background:#f0f0f0;"></div>
<div class="a" style="left:556px;top:663.6px;width:31.5px;height:12.8px;background:#c9c9c9;"></div>
<svg class="a" style="left:546px;top:666.5px;" width="6" height="8" viewBox="0 0 6 8"><path d="M4.500 0.800l-3 3l3 3" fill="none" stroke="#888" stroke-width="1.100"/></svg>
<div class="a" style="left:141px;top:678.6px;width:811.5px;height:16px;background:#f0f0f0;"></div>
<div class="a" style="left:141px;top:678.6px;width:85.7px;height:16px;background:#fff;"></div>
<div class="t" style="left:163px;top:681.5px;color:#222;font-size:10.5px;transform:scaleX(1.0702);">615 ,</div>
<div class="t" style="left:218px;top:681.5px;color:#222;font-size:10.5px;">3</div>
<div class="a" style="left:235px;top:686.3px;width:71px;height:1.2px;background:#d0d0d0;"></div>
<div class="a" style="left:239.5px;top:681px;width:7px;height:13px;background:#f4f4f4;border:1px solid #8a8a8a;box-sizing:border-box"></div>
<div class="a" style="left:313px;top:678.6px;width:67.7px;height:16px;background:#fff;"></div>
<div class="t" style="left:318px;top:681.5px;color:#222;font-size:10.5px;transform:scaleX(0.9829);">120%</div>
<svg class="a" style="left:369.5px;top:684px;" width="7" height="5" viewBox="0 0 7 5"><path d="M0.700 0.700l2.700 2.800l2.700-2.800" fill="none" stroke="#555" stroke-width="1"/></svg>
<div class="a" style="left:383.5px;top:678.6px;width:47.2px;height:16px;background:#fff;"></div>
<div class="a" style="left:435.3px;top:678.6px;width:31.1px;height:16px;background:#fff;"></div>
<div class="a" style="left:469.9px;top:678.6px;width:32.1px;height:16px;background:#fff;"></div>
<div class="a" style="left:505.6px;top:678.6px;width:68.0px;height:16px;background:#fff;"></div>
<div class="a" style="left:577px;top:678.6px;width:31px;height:16px;background:#fff;"></div>
<div class="t" style="left:546px;top:681.3px;color:#111;font-size:10px;transform:scaleX(0.9250);">共通</div>
<!-- props -->
<div class="a" style="left:956.5px;top:80px;width:236.5px;height:16.5px;background:#4b5e86;"></div>
<div class="t" style="left:958.8px;top:83px;color:#fff;font-size:10.5px;transform:scaleX(0.9104);">プロパティ - 請求書TOP画像</div>
<svg class="a" style="left:1159px;top:84px;" width="34" height="9" viewBox="0 0 34 9"><path d="M1 2.500h7l-3.500 4z" fill="#dfe6f2"/><path d="M13.500 1v4.500M17.500 1v4.500M13.500 1.500h4M12.500 5.500h6M15.500 5.500v3" stroke="#dfe6f2" stroke-width="1.100" fill="none"/><rect x="15.500" y="1.500" width="2" height="4" fill="#dfe6f2"/><path d="M24.500 1l6.500 7M31 1l-6.500 7" stroke="#dfe6f2" stroke-width="1.300"/></svg>
<div class="a" style="left:956.5px;top:96.5px;width:236.5px;height:222px;background:#fff;"></div>
<div class="a" style="left:956.5px;top:96.5px;width:236.5px;height:19.5px;background:#f1f1f1;"></div>
<div class="a" style="left:956.5px;top:116px;width:236.5px;height:1.2px;background:#9a9a9a;"></div>
<div class="a" style="left:958.5px;top:98px;width:17px;height:17px;background:#f6f6f6;border:1px solid #c8c8c8;box-sizing:border-box"></div>
<svg class="a" style="left:960px;top:100px;" width="14" height="13" viewBox="0 0 14 13"><g fill="#fff" stroke="#445" stroke-width=".9"><rect x="0.800" y="0.800" width="4.500" height="4.500"/><rect x="0.800" y="7.200" width="4.500" height="4.500"/></g><path d="M2 3h2M2 9.500h2" stroke="#223" stroke-width="1"/><path d="M7 2h6M7 4.500h6M7 8.500h6M7 11h6" stroke="#778" stroke-width="1" stroke-dasharray="2 1"/></svg>
<svg class="a" style="left:978px;top:98.5px;" width="16" height="16" viewBox="0 0 16 16"><text x="0.500" y="7.200" font-family="Liberation Sans,sans-serif" font-size="7.500" font-weight="bold" fill="#2a4ab0">A</text><text x="0.700" y="14.500" font-family="Liberation Sans,sans-serif" font-size="7.500" font-weight="bold" fill="#b02a2a">Z</text><path d="M9.500 1.500v12M7.800 11l1.700 2.800l1.700-2.800z" stroke="#111" stroke-width="1.100" fill="#111"/></svg>
<div class="a" style="left:956.5px;top:118.2px;width:236.5px;height:16.5px;background:#f1f3f8;"></div>
<svg class="a" style="left:960.5px;top:123.2px;" width="9" height="7" viewBox="0 0 9 7"><path d="M1 1.200l3.500 3.600l3.500-3.600" fill="none" stroke="#333" stroke-width="1.300"/></svg>
<div class="t" style="left:977px;top:121.2px;color:#111;font-size:10.5px;font-weight:700;">その他</div>
<div class="a" style="left:956.5px;top:134.7px;width:17px;height:16.5px;background:#f1f3f8;"></div>
<div class="a" style="left:973.5px;top:150.2px;width:219.5px;height:1px;background:#f0f0f0;"></div>
<div class="a" style="left:1058px;top:134.7px;width:1px;height:16.5px;background:#f0f0f0;"></div>
<div class="t" style="left:977px;top:137.7px;color:#222;font-size:10.5px;transform:scaleX(0.9006);">フォーム名</div>
<div class="t" style="left:1061.5px;top:137.7px;color:#111;font-size:10.5px;font-weight:700;transform:scaleX(0.9066);">請求書TOP画像</div>
<div class="a" style="left:956.5px;top:151.2px;width:236.5px;height:16.5px;background:#f1f3f8;"></div>
<svg class="a" style="left:960.5px;top:156.2px;" width="9" height="7" viewBox="0 0 9 7"><path d="M1 1.200l3.500 3.600l3.500-3.600" fill="none" stroke="#333" stroke-width="1.300"/></svg>
<div class="t" style="left:977px;top:154.2px;color:#111;font-size:10.5px;font-weight:700;">分割</div>
<div class="a" style="left:956.5px;top:167.7px;width:17px;height:16.5px;background:#f1f3f8;"></div>
<div class="a" style="left:973.5px;top:183.2px;width:219.5px;height:1px;background:#f0f0f0;"></div>
<div class="a" style="left:1058px;top:167.7px;width:1px;height:16.5px;background:#f0f0f0;"></div>
<div class="a" style="left:977px;top:167.7px;width:81px;height:16px;overflow:hidden"><div class="t" style="left:0px;top:3px;color:#222;font-size:10.5px;transform:scaleX(0.9333);">データが無い分割する</div></div>
<div class="t" style="left:1061.5px;top:170.7px;color:#111;font-size:10.5px;font-weight:700;transform:scaleX(0.9680);">False</div>
<div class="a" style="left:956.5px;top:184.2px;width:17px;height:16.5px;background:#f1f3f8;"></div>
<div class="a" style="left:973.5px;top:199.7px;width:219.5px;height:1px;background:#f0f0f0;"></div>
<div class="a" style="left:1058px;top:184.2px;width:1px;height:16.5px;background:#f0f0f0;"></div>
<div class="t" style="left:977px;top:187.2px;color:#222;font-size:10.5px;transform:scaleX(0.8810);">印字方向</div>
<div class="t" style="left:1061.5px;top:187.2px;color:#111;font-size:10.5px;font-weight:700;transform:scaleX(0.9524);">横</div>
<div class="a" style="left:956.5px;top:200.7px;width:17px;height:16.5px;background:#f1f3f8;"></div>
<div class="a" style="left:973.5px;top:216.2px;width:219.5px;height:1px;background:#f0f0f0;"></div>
<div class="a" style="left:1058px;top:200.7px;width:1px;height:16.5px;background:#f0f0f0;"></div>
<div class="t" style="left:977px;top:203.7px;color:#222;font-size:10.5px;transform:scaleX(0.8889);">横方向分割数</div>
<div class="t" style="left:1061.5px;top:203.7px;color:#111;font-size:10.5px;font-weight:700;">1</div>
<div class="a" style="left:956.5px;top:217.2px;width:17px;height:16.5px;background:#f1f3f8;"></div>
<div class="a" style="left:973.5px;top:232.7px;width:219.5px;height:1px;background:#f0f0f0;"></div>
<div class="a" style="left:1058px;top:217.2px;width:1px;height:16.5px;background:#f0f0f0;"></div>
<div class="t" style="left:977px;top:220.2px;color:#222;font-size:10.5px;transform:scaleX(0.8889);">縦方向分割数</div>
<div class="t" style="left:1061.5px;top:220.2px;color:#111;font-size:10.5px;font-weight:700;">1</div>
<div class="a" style="left:956.5px;top:233.7px;width:17px;height:16.5px;background:#f1f3f8;"></div>
<div class="a" style="left:973.5px;top:249.2px;width:219.5px;height:1px;background:#f0f0f0;"></div>
<div class="a" style="left:1058px;top:233.7px;width:1px;height:16.5px;background:#f0f0f0;"></div>
<div class="t" style="left:977px;top:236.7px;color:#222;font-size:10.5px;transform:scaleX(0.8810);">線の種類</div>
<div class="t" style="left:1061.5px;top:236.7px;color:#111;font-size:10.5px;font-weight:700;transform:scaleX(0.9048);">なし</div>
<div class="a" style="left:956.5px;top:250.2px;width:17px;height:16.5px;background:#f1f3f8;"></div>
<div class="a" style="left:973.5px;top:265.7px;width:219.5px;height:1px;background:#f0f0f0;"></div>
<div class="a" style="left:1058px;top:250.2px;width:1px;height:16.5px;background:#f0f0f0;"></div>
<div class="t" style="left:977px;top:253.2px;color:#222;font-size:10.5px;transform:scaleX(0.8889);">線の色</div>
<div class="a" style="left:1060.5px;top:251.7px;width:14.5px;height:13px;background:#000;"></div>
<div class="t" style="left:1082px;top:253.2px;color:#111;font-size:10.5px;font-weight:700;transform:scaleX(1.0657);">255, 0, 0, 0</div>
<div class="a" style="left:956.5px;top:266.7px;width:17px;height:16.5px;background:#f1f3f8;"></div>
<div class="a" style="left:973.5px;top:282.2px;width:219.5px;height:1px;background:#f0f0f0;"></div>
<div class="a" style="left:1058px;top:266.7px;width:1px;height:16.5px;background:#f0f0f0;"></div>
<div class="t" style="left:977px;top:269.7px;color:#222;font-size:10.5px;transform:scaleX(0.9615);">線の幅 [ドット]</div>
<div class="t" style="left:1061.5px;top:269.7px;color:#111;font-size:10.5px;font-weight:700;">1</div>
<div class="a" style="left:956.5px;top:283.2px;width:236.5px;height:16.5px;background:#f1f3f8;"></div>
<svg class="a" style="left:960.5px;top:288.2px;" width="9" height="7" viewBox="0 0 9 7"><path d="M1 1.200l3.500 3.600l3.500-3.600" fill="none" stroke="#333" stroke-width="1.300"/></svg>
<div class="t" style="left:977px;top:286.2px;color:#111;font-size:10.5px;font-weight:700;">用紙</div>
<div class="a" style="left:956.5px;top:299.7px;width:17px;height:16.5px;background:#f1f3f8;"></div>
<div class="a" style="left:973.5px;top:315.2px;width:219.5px;height:1px;background:#f0f0f0;"></div>
<div class="a" style="left:1058px;top:299.7px;width:1px;height:16.5px;background:#f0f0f0;"></div>
<div class="t" style="left:977px;top:302.7px;color:#777;font-size:10.5px;transform:scaleX(0.9467);">高さ [ドット]</div>
<div class="t" style="left:1061.5px;top:302.7px;color:#808080;font-size:10.5px;">1123</div>
<!-- preview -->
<div class="a" style="left:644px;top:310px;width:549.5px;height:384.7px;background:#fff;box-shadow:-1px -0.5px 1.500px 0.500px rgba(255,255,255,0.9)"></div>
<div class="a" style="left:672.1px;top:334px;width:141px;height:44.8px;background:#cbe8eb;border:1.200px solid #3d5a60;border-radius:7px;box-sizing:border-box"></div>
<div class="t" style="left:693.4px;top:344.4px;color:#1b8fa2;font-size:24.5px;font-weight:500;transform:scaleX(1.0449);">請</div>
<div class="t" style="left:729.3px;top:344.4px;color:#1b8fa2;font-size:24.5px;font-weight:500;transform:scaleX(1.0449);">求</div>
<div class="t" style="left:766px;top:344.4px;color:#1b8fa2;font-size:24.5px;font-weight:500;transform:scaleX(1.0449);">書</div>
<div class="t" style="left:672.9px;top:403.5px;color:#222;font-size:14.5px;transform:scaleX(0.9059);">サンプル株式会社</div>
<div class="t" style="left:673px;top:428.9px;color:#222;font-size:10.5px;transform:scaleX(0.9155);">サンプル事業部</div>
<div class="t" style="left:856.4px;top:428.5px;color:#222;font-size:11px;transform:scaleX(1.0273);">御中</div>
<div class="t" style="left:675.2px;top:461.6px;color:#222;font-size:10px;transform:scaleX(0.9799);">下記の通りご請求申し上げます。</div>
<div class="t" style="left:673px;top:506.8px;color:#222;font-size:11px;transform:scaleX(1.0068);">合計金額</div>
<div class="t" style="left:781px;top:498.2px;color:#111;font-size:22.6px;transform:scaleX(1.0981);">¥257,726</div>
<div class="a" style="left:672.5px;top:521.5px;width:212.5px;height:1.1px;background:#333;"></div>
<div class="a" style="left:1044px;top:336.600px;width:125px;height:44px;overflow:hidden"><svg class="a" style="left:2.3px;top:-8.4px" width="118.2" height="48.0" viewBox="0 0 156.700 63.600"><g fill="none" stroke="#43358a" stroke-linecap="round" stroke-linejoin="round"><path d="M19.100 22.900l-14.400 6" stroke-width="2.500"/><path d="M4.700 28.900l36.800 19.900" stroke-width="2.300"/><path d="M41.500 48.800c6.500-5.800 14.500-9.300 25.900-12.300" stroke-width="1.500"/></g><path d="M46.400 53.300c5.600-6.800 12.600-10.800 21-12.800v-3.500c-9.400 2.500-16.400 8-21 16.300z" fill="#1b9aa6"/><path d="M100 35.500c14-1 22.500-6.500 27.500-16.100c-1.500 7.600-5 12.600-9.300 16.100z" fill="#1b9aa6"/><rect x="67.400" y="35.200" width="86.700" height="26.200" fill="#10939f"/><text x="20" y="29.200" font-family="Liberation Sans,sans-serif" font-weight="bold" font-size="28.400" fill="#43358a" textLength="86.500" lengthAdjust="spacingAndGlyphs">Paples</text><text x="72.600" y="54.100" font-family="Liberation Sans,sans-serif" font-weight="bold" font-size="20.300" fill="#f2fbfb" textLength="77.500" lengthAdjust="spacingAndGlyphs">Reports</text></svg></div>
<div class="t" style="left:1025.5px;top:386.4px;color:#222;font-size:11.3px;transform:scaleX(1.0296);">請求書番号：E001M00789</div>
<div class="t" style="left:1061.2px;top:400.1px;color:#222;font-size:11.3px;transform:scaleX(1.0947);">日付：2023/03/15</div>
<svg class="a" style="left:917.5px;top:422.6px" width="25.9" height="13.1" viewBox="0 0 39.500 20"><path d="M0 19.500h4.200l3.800-11l-2.300-4.500z" fill="#1c1c1c"/><path d="M4.200 0l9.600 18.800l-4.100.7l-3.800-9.600z" fill="#e0262c"/><text x="12.300" y="19.400" font-family="Liberation Sans,sans-serif" font-weight="bold" font-style="italic" font-size="22" fill="#1c1c1c" textLength="26.800" lengthAdjust="spacingAndGlyphs">HS</text><path d="M9.700 19.500h4.200l5.400-15.500h-4.200z" fill="#1c1c1c"/></svg>
<div class="t" style="left:952px;top:424.2px;color:#222;font-size:11.7px;transform:scaleX(0.8028);">日鉄日立システムソリューションズ株式会社</div>
<svg class="a" style="left:1097.5px;top:414.5px" width="69.5" height="66.6" viewBox="0 0 69.500 66.600"><rect x="0.600" y="0.600" width="68.300" height="65.400" rx="2" fill="none" stroke="#e79089" stroke-width="1"/><g font-family="Noto Sans CJK JP,sans-serif" font-weight="700" fill="#df4a42"><text transform="translate(46.500,15.3) scale(1.080,0.900)" font-size="17.600">日</text><text transform="translate(46.500,31.05) scale(1.080,0.900)" font-size="17.600">鉄</text><text transform="translate(46.500,46.8) scale(1.080,0.900)" font-size="17.600">日</text><text transform="translate(46.500,62.55) scale(1.080,0.900)" font-size="17.600">立</text><text transform="translate(2.600,15.3) scale(1.080,0.900)" font-size="17.600">株</text><text transform="translate(2.600,31.05) scale(1.080,0.900)" font-size="17.600">式</text><text transform="translate(2.600,46.8) scale(1.080,0.900)" font-size="17.600">会</text><text transform="translate(2.600,62.55) scale(1.080,0.900)" font-size="17.600">社</text></g><g font-family="Noto Sans CJK JP,sans-serif" font-weight="700" fill="#df4a42" opacity=".75"><text transform="translate(27.500,7.3) scale(1.120,0.460)" font-size="12.500">シ</text><text transform="translate(27.500,12.95) scale(1.120,0.460)" font-size="12.500">ス</text><text transform="translate(27.500,18.6) scale(1.120,0.460)" font-size="12.500">テ</text><text transform="translate(27.500,24.25) scale(1.120,0.460)" font-size="12.500">ム</text><text transform="translate(27.500,29.9) scale(1.120,0.460)" font-size="12.500">ソ</text><text transform="translate(27.500,35.55) scale(1.120,0.460)" font-size="12.500">リ</text><text transform="translate(27.500,41.2) scale(1.120,0.460)" font-size="12.500">ュ</text><text transform="translate(27.500,46.85) scale(1.120,0.460)" font-size="12.500">ー</text><text transform="translate(27.500,52.5) scale(1.120,0.460)" font-size="12.500">シ</text><text transform="translate(27.500,58.15) scale(1.120,0.460)" font-size="12.500">ョ</text><text transform="translate(27.500,63.8) scale(1.120,0.460)" font-size="12.500">ン</text><text transform="translate(27.500,69.45) scale(1.120,0.460)" font-size="12.500">ズ</text></g></svg>
<div class="t" style="left:930.5px;top:449.8px;color:#222;font-size:11.5px;transform:scaleX(1.0564);">〒104-6591</div>
<div class="t" style="left:936.5px;top:469.9px;color:#222;font-size:11.3px;transform:scaleX(0.9631);">東京都中央区明石町8-1 聖路加タワー26F</div>
<div class="t" style="left:936.5px;top:493.5px;color:#222;font-size:11.3px;transform:scaleX(0.9876);">担当：〇〇 太郎</div>
<div class="t" style="left:936.5px;top:514.6px;color:#222;font-size:11.3px;transform:scaleX(1.0316);">事業者登録番号：T3010001025546</div>
<svg class="a" style="left:1131.7px;top:492.4px" width="31.3" height="31.3" viewBox="0 0 25 25" shape-rendering="crispEdges"><rect width="25" height="25" fill="#fff"/><path d="M0 8h1v1h-1zM0 9h1v1h-1zM0 11h1v1h-1zM0 13h1v1h-1zM0 14h1v1h-1zM0 16h1v1h-1zM1 8h1v1h-1zM1 9h1v1h-1zM1 10h1v1h-1zM1 11h1v1h-1zM1 13h1v1h-1zM1 14h1v1h-1zM2 9h1v1h-1zM2 11h1v1h-1zM2 13h1v1h-1zM2 14h1v1h-1zM2 15h1v1h-1zM2 16h1v1h-1zM3 9h1v1h-1zM3 12h1v1h-1zM3 14h1v1h-1zM3 15h1v1h-1zM3 16h1v1h-1zM4 9h1v1h-1zM4 10h1v1h-1zM4 12h1v1h-1zM4 13h1v1h-1zM4 16h1v1h-1zM5 12h1v1h-1zM5 14h1v1h-1zM5 15h1v1h-1zM6 8h1v1h-1zM6 9h1v1h-1zM6 10h1v1h-1zM6 15h1v1h-1zM7 10h1v1h-1zM7 13h1v1h-1zM7 15h1v1h-1zM8 3h1v1h-1zM8 4h1v1h-1zM8 6h1v1h-1zM8 7h1v1h-1zM8 8h1v1h-1zM8 9h1v1h-1zM8 10h1v1h-1zM8 12h1v1h-1zM8 13h1v1h-1zM8 14h1v1h-1zM8 16h1v1h-1zM8 17h1v1h-1zM8 22h1v1h-1zM8 23h1v1h-1zM8 24h1v1h-1zM9 2h1v1h-1zM9 3h1v1h-1zM9 4h1v1h-1zM9 5h1v1h-1zM9 6h1v1h-1zM9 8h1v1h-1zM9 9h1v1h-1zM9 10h1v1h-1zM9 11h1v1h-1zM9 18h1v1h-1zM9 23h1v1h-1zM9 24h1v1h-1zM10 0h1v1h-1zM10 2h1v1h-1zM10 3h1v1h-1zM10 4h1v1h-1zM10 5h1v1h-1zM10 6h1v1h-1zM10 7h1v1h-1zM10 8h1v1h-1zM10 9h1v1h-1zM10 10h1v1h-1zM10 11h1v1h-1zM10 12h1v1h-1zM10 15h1v1h-1zM10 16h1v1h-1zM10 17h1v1h-1zM10 18h1v1h-1zM10 19h1v1h-1zM10 22h1v1h-1zM10 23h1v1h-1zM10 24h1v1h-1zM11 0h1v1h-1zM11 1h1v1h-1zM11 2h1v1h-1zM11 4h1v1h-1zM11 5h1v1h-1zM11 8h1v1h-1zM11 10h1v1h-1zM11 15h1v1h-1zM11 16h1v1h-1zM11 17h1v1h-1zM11 21h1v1h-1zM11 22h1v1h-1zM12 4h1v1h-1zM12 6h1v1h-1zM12 7h1v1h-1zM12 8h1v1h-1zM12 9h1v1h-1zM12 10h1v1h-1zM12 13h1v1h-1zM12 17h1v1h-1zM12 18h1v1h-1zM12 19h1v1h-1zM12 20h1v1h-1zM12 21h1v1h-1zM13 0h1v1h-1zM13 3h1v1h-1zM13 8h1v1h-1zM13 9h1v1h-1zM13 11h1v1h-1zM13 14h1v1h-1zM13 15h1v1h-1zM13 18h1v1h-1zM13 19h1v1h-1zM13 20h1v1h-1zM13 23h1v1h-1zM14 2h1v1h-1zM14 4h1v1h-1zM14 5h1v1h-1zM14 10h1v1h-1zM14 13h1v1h-1zM14 14h1v1h-1zM14 15h1v1h-1zM14 16h1v1h-1zM14 18h1v1h-1zM14 19h1v1h-1zM14 20h1v1h-1zM14 22h1v1h-1zM14 23h1v1h-1zM15 1h1v1h-1zM15 6h1v1h-1zM15 7h1v1h-1zM15 8h1v1h-1zM15 9h1v1h-1zM15 11h1v1h-1zM15 12h1v1h-1zM15 15h1v1h-1zM15 19h1v1h-1zM15 21h1v1h-1zM15 22h1v1h-1zM16 3h1v1h-1zM16 8h1v1h-1zM16 10h1v1h-1zM16 15h1v1h-1zM16 19h1v1h-1zM16 20h1v1h-1zM16 21h1v1h-1zM16 22h1v1h-1zM16 23h1v1h-1zM16 24h1v1h-1zM17 11h1v1h-1zM17 14h1v1h-1zM17 17h1v1h-1zM17 19h1v1h-1zM17 20h1v1h-1zM17 23h1v1h-1zM17 24h1v1h-1zM18 9h1v1h-1zM18 10h1v1h-1zM18 11h1v1h-1zM18 13h1v1h-1zM18 15h1v1h-1zM18 16h1v1h-1zM18 17h1v1h-1zM18 20h1v1h-1zM18 24h1v1h-1zM19 8h1v1h-1zM19 9h1v1h-1zM19 11h1v1h-1zM19 12h1v1h-1zM19 13h1v1h-1zM19 16h1v1h-1zM19 17h1v1h-1zM19 21h1v1h-1zM19 22h1v1h-1zM19 24h1v1h-1zM20 8h1v1h-1zM20 12h1v1h-1zM20 14h1v1h-1zM20 16h1v1h-1zM20 17h1v1h-1zM20 20h1v1h-1zM20 21h1v1h-1zM20 23h1v1h-1zM20 24h1v1h-1zM21 8h1v1h-1zM21 9h1v1h-1zM21 10h1v1h-1zM21 11h1v1h-1zM21 12h1v1h-1zM21 14h1v1h-1zM21 16h1v1h-1zM21 17h1v1h-1zM21 18h1v1h-1zM21 19h1v1h-1zM21 20h1v1h-1zM21 23h1v1h-1zM21 24h1v1h-1zM22 9h1v1h-1zM22 11h1v1h-1zM22 12h1v1h-1zM22 14h1v1h-1zM22 18h1v1h-1zM22 22h1v1h-1zM22 23h1v1h-1zM22 24h1v1h-1zM23 8h1v1h-1zM23 9h1v1h-1zM23 11h1v1h-1zM23 12h1v1h-1zM23 13h1v1h-1zM23 17h1v1h-1zM23 18h1v1h-1zM23 19h1v1h-1zM23 20h1v1h-1zM23 21h1v1h-1zM23 22h1v1h-1zM23 23h1v1h-1zM24 10h1v1h-1zM24 12h1v1h-1zM24 13h1v1h-1zM24 14h1v1h-1zM24 15h1v1h-1zM24 16h1v1h-1zM24 18h1v1h-1zM24 20h1v1h-1zM24 21h1v1h-1zM24 22h1v1h-1zM24 23h1v1h-1zM24 24h1v1h-1z" fill="#111"/><rect x="0" y="0" width="7" height="7" fill="#111"/><rect x="1" y="1" width="5" height="5" fill="#fff"/><rect x="2" y="2" width="3" height="3" fill="#111"/><rect x="18" y="0" width="7" height="7" fill="#111"/><rect x="19" y="1" width="5" height="5" fill="#fff"/><rect x="20" y="2" width="3" height="3" fill="#111"/><rect x="0" y="18" width="7" height="7" fill="#111"/><rect x="1" y="19" width="5" height="5" fill="#fff"/><rect x="2" y="20" width="3" height="3" fill="#111"/></svg>
<div class="a" style="left:660.8px;top:544.6px;width:504.4px;height:22.3px;background:#0a8b9a;border-radius:7px 7px 0 0;border:1px solid #0b6672;border-bottom:none;box-sizing:border-box"></div>
<div class="a" style="left:661.3px;top:566.9px;width:503.4px;height:22.4px;background:#fff;"></div>
<div class="a" style="left:661.3px;top:589.3px;width:503.4px;height:22.0px;background:#cde9ec;"></div>
<div class="a" style="left:661.3px;top:611.3px;width:503.4px;height:22.8px;background:#fff;"></div>
<div class="a" style="left:661.3px;top:634.1px;width:503.4px;height:22.7px;background:#cde9ec;"></div>
<div class="a" style="left:661.3px;top:656.8px;width:503.4px;height:22.3px;background:#fff;"></div>
<div class="a" style="left:661.3px;top:679.1px;width:503.4px;height:15.6px;background:#cde9ec;"></div>
<div class="a" style="left:661.3px;top:566.4px;width:503.4px;height:1px;background:#3a3a3a;"></div>
<div class="a" style="left:661.3px;top:588.8px;width:503.4px;height:1px;background:#3a3a3a;"></div>
<div class="a" style="left:661.3px;top:610.8px;width:503.4px;height:1px;background:#3a3a3a;"></div>
<div class="a" style="left:661.3px;top:633.6px;width:503.4px;height:1px;background:#3a3a3a;"></div>
<div class="a" style="left:661.3px;top:656.3px;width:503.4px;height:1px;background:#3a3a3a;"></div>
<div class="a" style="left:661.3px;top:678.6px;width:503.4px;height:1px;background:#3a3a3a;"></div>
<div class="a" style="left:660.8px;top:566.5px;width:1px;height:128.2px;background:#3a3a3a;"></div>
<div class="a" style="left:865.5px;top:545.5px;width:1px;height:149.2px;background:#3a3a3a;"></div>
<div class="a" style="left:944.6px;top:545.5px;width:1px;height:149.2px;background:#3a3a3a;"></div>
<div class="a" style="left:1022.7px;top:545.5px;width:1px;height:149.2px;background:#3a3a3a;"></div>
<div class="a" style="left:1105.8px;top:545.5px;width:1px;height:149.2px;background:#3a3a3a;"></div>
<div class="a" style="left:1164.2px;top:566.5px;width:1px;height:128.2px;background:#3a3a3a;"></div>
<div class="t" style="left:754.5px;top:551.4px;color:#fff;font-size:9.6px;font-weight:700;transform:scaleX(1.0423);">品名</div>
<div class="t" style="left:895.3px;top:551.4px;color:#fff;font-size:9.6px;font-weight:700;transform:scaleX(1.0423);">数量</div>
<div class="t" style="left:976px;top:551.4px;color:#fff;font-size:9.6px;font-weight:700;transform:scaleX(1.0423);">単価</div>
<div class="t" style="left:1054.5px;top:551.4px;color:#fff;font-size:9.6px;font-weight:700;transform:scaleX(1.0423);">合計</div>
<div class="t" style="left:1112.5px;top:551.4px;color:#fff;font-size:9.6px;font-weight:700;transform:scaleX(1.2313);">税率(%)</div>
<div class="t" style="left:671.5px;top:574.3px;color:#111;font-size:9px;font-weight:700;font-family:'Noto Sans CJK JP',sans-serif;transform:scaleX(1.2440);">○○○○○</div>
<div class="t" style="right:278.7px;top:573.8px;font-size:11px;color:#222;transform-origin:100% 0;transform:scaleX(1.140)">3</div>
<div class="t" style="right:198.4px;top:573.8px;font-size:11px;color:#222;transform-origin:100% 0;transform:scaleX(1.140)">400</div>
<div class="t" style="right:118.7px;top:573.8px;font-size:11px;color:#222;transform-origin:100% 0;transform:scaleX(1.140)">1,200</div>
<div class="t" style="left:1121.100px;width:40px;text-align:center;top:573.0px;font-size:11px;color:#222;transform-origin:50% 0;transform:scaleX(1.140)">8</div>
<div class="t" style="left:671.5px;top:597px;color:#111;font-size:9px;font-weight:700;font-family:'Noto Sans CJK JP',sans-serif;transform:scaleX(1.2440);">□□□□□</div>
<div class="t" style="right:278.7px;top:596.5px;font-size:11px;color:#222;transform-origin:100% 0;transform:scaleX(1.140)">7</div>
<div class="t" style="right:198.4px;top:596.5px;font-size:11px;color:#222;transform-origin:100% 0;transform:scaleX(1.140)">3,000</div>
<div class="t" style="right:118.7px;top:596.5px;font-size:11px;color:#222;transform-origin:100% 0;transform:scaleX(1.140)">21,000</div>
<div class="t" style="left:1121.100px;width:40px;text-align:center;top:595.7px;font-size:11px;color:#222;transform-origin:50% 0;transform:scaleX(1.140)">8</div>
<div class="t" style="left:671.5px;top:619.2px;color:#111;font-size:9px;font-weight:700;font-family:'Noto Sans CJK JP',sans-serif;transform:scaleX(1.2440);">△△△△△</div>
<div class="t" style="right:278.7px;top:618.7px;font-size:11px;color:#222;transform-origin:100% 0;transform:scaleX(1.140)">5</div>
<div class="t" style="right:198.4px;top:618.7px;font-size:11px;color:#222;transform-origin:100% 0;transform:scaleX(1.140)">42,500</div>
<div class="t" style="right:118.7px;top:618.7px;font-size:11px;color:#222;transform-origin:100% 0;transform:scaleX(1.140)">212,500</div>
<div class="t" style="left:1121.100px;width:40px;text-align:center;top:617.9px;font-size:11px;color:#222;transform-origin:50% 0;transform:scaleX(1.140)">10</div>
</div>
</body></html>
